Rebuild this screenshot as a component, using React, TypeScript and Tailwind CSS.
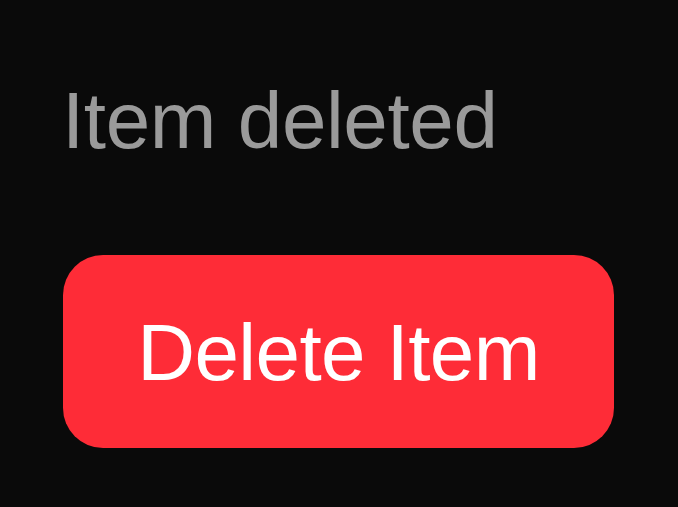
export default function App() {
  return (
    <div
      className="flex h-[507px] w-[678px] flex-col items-start bg-[#0a0a0a] pl-[62px] pt-[73px]"
      style={{ fontFamily: "'Liberation Sans', Arial, sans-serif" }}
    >
      <p className="text-[80px] leading-[96px] tracking-[-0.4px] text-[#9a9a9a]">Item deleted</p>
      <button className="ml-[1px] mt-[86px] flex h-[193px] w-[551px] items-center justify-center rounded-[40px] bg-[#fe2c37] pt-[2px] text-[80px] leading-[96px] tracking-[-0.6px] text-white">
        Delete Item
      </button>
    </div>
  );
}
